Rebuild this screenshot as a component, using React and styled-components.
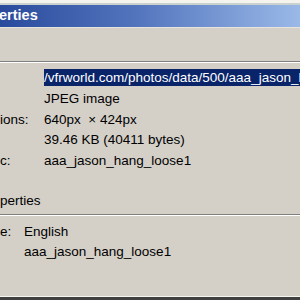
import React from "react";
import styled, { createGlobalStyle } from "styled-components";

const Global = createGlobalStyle`
  html, body { margin: 0; padding: 0; }
  body {
    width: 300px;
    height: 300px;
    overflow: hidden;
    background: #d4d0c8;
    font-family: "Liberation Sans", Arial, sans-serif;
  }
`;

const Window = styled.div`
  width: 300px;
  height: 300px;
  display: flex;
  flex-direction: column;
  background: #d4d0c8;
  overflow: hidden;
`;

const TopEdge = styled.div`
  height: 3px;
  background: #f4f3ee;
  border-bottom: 2px solid #c9d2cf;
`;

const TitleBar = styled.div`
  height: 22px;
  line-height: 21px;
  background: linear-gradient(to right, #2a4b9c 0%, #5274bd 45%, #9ab9e8 100%);
  color: #fff;
  font-weight: bold;
  font-size: 14.5px;
  white-space: nowrap;
  border-bottom: 1px solid #e6e4dc;
`;

const TitleText = styled.span`
  margin-left: -1px;
`;

const Blank = styled.div`
  height: 33px;
`;

const Separator = styled.div`
  border-top: 1px solid #808080;
  border-bottom: 1px solid #ffffff;
  margin-top: ${(p) => p.$top || 0}px;
`;

const Grid = styled.div`
  display: grid;
  grid-template-columns: ${(p) => p.$label}px 1fr;
  grid-auto-rows: ${(p) => p.$pitch}px;
  line-height: ${(p) => p.$pitch}px;
  font-size: 13.5px;
  color: #000;
  margin-top: ${(p) => p.$top}px;
  white-space: pre;
`;

const Label = styled.div`
  overflow: hidden;
`;

const Value = styled.div`
  overflow: hidden;
`;

const Selected = styled.span`
  background: #0a246a;
  color: #fff;
  padding: 1px 20px 1px 1px;
  margin-left: -1px;
`;

const SectionHeader = styled.div`
  font-size: 13.5px;
  line-height: 21px;
  margin-top: 18px;
  color: #000;
`;

const BottomEdge = styled.div`
  margin-top: auto;
  border-top: 1px solid #f6f5f0;
  height: 2px;
  background: #404040;
  border-bottom: 1px solid #404040;
`;

const main = [
  { label: "", value: "/vfrworld.com/photos/data/500/aaa_jason_hang_loose1.jpg", sel: true },
  { label: "", value: "JPEG image" },
  { label: "ions:", value: "640px  \u00d7 424px" },
  { label: "", value: "39.46 KB (40411 bytes)" },
  { label: "c:", value: "aaa_jason_hang_loose1" },
];

const extra = [
  { label: "e:", value: "English" },
  { label: "", value: "aaa_jason_hang_loose1" },
];

export default function App() {
  return (
    <Window>
      <Global />
      <TopEdge />
      <TitleBar>
        <TitleText>erties</TitleText>
      </TitleBar>
      <Blank />
      <Separator />
      <Grid $label={44} $pitch={20.75} $top={5}>
        {main.map((r, i) => (
          <React.Fragment key={i}>
            <Label>{r.label}</Label>
            <Value>{r.sel ? <Selected>{r.value}</Selected> : r.value}</Value>
          </React.Fragment>
        ))}
      </Grid>
      <SectionHeader>perties</SectionHeader>
      <Separator $top={3} />
      <Grid $label={24} $pitch={20} $top={6}>
        {extra.map((r, i) => (
          <React.Fragment key={i}>
            <Label>{r.label}</Label>
            <Value>{r.value}</Value>
          </React.Fragment>
        ))}
      </Grid>
      <BottomEdge />
    </Window>
  );
}
